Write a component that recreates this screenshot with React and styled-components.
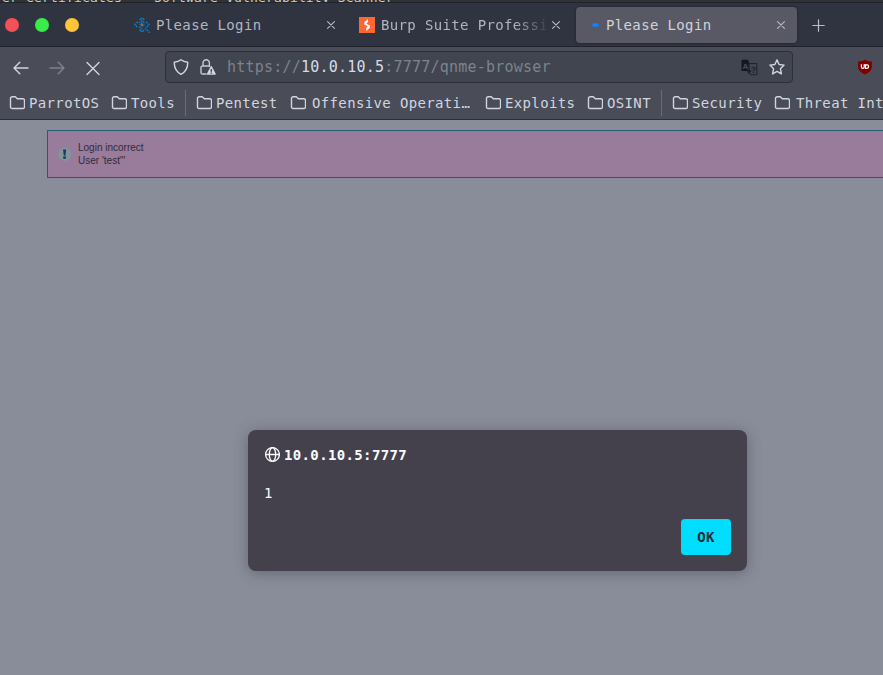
import React from "react";
import styled, { createGlobalStyle } from "styled-components";

const Global = createGlobalStyle`
  * { box-sizing: border-box; }
  body { margin: 0; overflow: hidden; background: #898d99; }
  svg { display: block; flex: none; }
`;

const Screen = styled.div`
  width: 883px;
  height: 675px;
  display: flex;
  flex-direction: column;
  overflow: hidden;
  background: #898d99;
  font-family: "DejaVu Sans Mono", monospace;
  font-size: 14px;
  letter-spacing: 0.36px;
  white-space: pre;
`;

const BackgroundStrip = styled.div`
  height: 3px;
  flex: none;
  overflow: hidden;
  background: #303234;
  border-bottom: 1px solid #202329;
  color: #d0ccc0;
  font-size: 13px;
  line-height: 16px;
  letter-spacing: 0.17px;
  padding-left: 2px;
`;
const StripText = styled.div`
  margin-top: -10px;
`;

const TabBar = styled.div`
  height: 44px;
  flex: none;
  display: flex;
  align-items: center;
  background: #303440;
  border-bottom: 1px solid #20232b;
  padding-left: 5px;
`;
const WindowButtons = styled.div`
  display: flex;
  gap: 16px;
  width: 121px;
`;
const WindowDot = styled.span`
  width: 14px;
  height: 14px;
  border-radius: 50%;
  background: ${(p) => p.$color};
`;
const Tab = styled.div`
  display: flex;
  align-items: center;
  width: ${(p) => p.$width}px;
  height: 36px;
  padding: 0 ${(p) => (p.$active ? 11 : 15)}px 0 8px;
  border-radius: 4px;
  color: ${(p) => (p.$active ? "#d0d3dc" : "#b0b5c3")};
  background: ${(p) => (p.$active ? "#585965" : "transparent")};
  box-shadow: ${(p) => (p.$active ? "0 0 3px rgba(0,0,0,.4)" : "none")};
`;
const TabTitle = styled.span`
  flex: 1;
  min-width: 0;
  margin-left: 6px;
  margin-right: ${(p) => (p.$fade ? 4 : 0)}px;
  overflow: hidden;
  ${(p) => p.$fade && "mask-image: linear-gradient(to right, #000 80%, transparent 102%);"}
`;
const NewTab = styled.div`
  margin: 1px 0 0 15px;
`;

const NavBar = styled.div`
  height: 41px;
  flex: none;
  display: flex;
  align-items: center;
  background: #4a4c57;
  padding: 0 10px 1px 13px;
`;
const NavButtons = styled.div`
  display: flex;
  gap: 20px;
  width: 152px;
  padding-top: 1px;
`;
const AddressBar = styled.div`
  width: 628px;
  height: 32px;
  display: flex;
  align-items: center;
  padding: 0 7px;
  border: 1px solid #2c2f39;
  border-radius: 4px;
  background: #404550;
`;
const Address = styled.span`
  flex: 1;
  margin-left: 11px;
  font-size: 15px;
  letter-spacing: 0.22px;
  color: #7e828d;
`;
const Host = styled.span`
  color: #d8dbe5;
`;
const IconSlot = styled.span`
  margin-left: ${(p) => p.$left}px;
`;

const BookmarksBar = styled.div`
  height: 32px;
  flex: none;
  display: flex;
  align-items: center;
  background: #4a4c57;
  border-bottom: 1px solid #2c2e38;
  padding: 0 0 2px 9px;
  color: #d0d5e1;
  overflow: hidden;
`;
const Bookmark = styled.div`
  display: flex;
  align-items: center;
  gap: ${(p) => p.$gap}px;
  width: ${(p) => p.$width}px;
  flex: none;
`;
const Divider = styled.div`
  width: 1px;
  height: 26px;
  flex: none;
  margin-right: 10px;
  background: #6a6d78;
`;

const Page = styled.main`
  flex: 1;
  display: flex;
  flex-direction: column;
  padding-top: 10px;
`;
const Alert = styled.div`
  display: flex;
  align-items: center;
  margin-left: 47px;
  width: 850px;
  height: 48px;
  padding-left: 10px;
  border: 1px solid #285978;
  background: #997b9b;
  color: #302c3c;
  font: 10px/13px "Liberation Sans", Arial, sans-serif;
  letter-spacing: 0;
`;
const AlertText = styled.div`
  margin-left: 6px;
`;

const Dialog = styled.section`
  display: flex;
  flex-direction: column;
  width: 499px;
  height: 141px;
  margin: 252px 0 0 248px;
  padding: 16px;
  border-radius: 8px;
  background: #44414d;
  color: #fbfbfe;
  box-shadow: 0 2px 14px rgba(58, 57, 68, 0.45);
`;
const DialogTitle = styled.div`
  display: flex;
  align-items: center;
  gap: 4px;
  height: 18px;
  font-weight: bold;
`;
const Message = styled.div`
  margin-top: 20px;
  height: 18px;
  line-height: 18px;
`;
const OkButton = styled.button`
  align-self: flex-end;
  width: 50px;
  height: 36px;
  margin-top: 17px;
  padding: 0;
  border: 0;
  border-radius: 4px;
  background: #00ddff;
  color: #2b2a33;
  font: bold 14px "DejaVu Sans Mono", monospace;
  letter-spacing: 0.36px;
`;

const Stroke = ({ size = 16, color = "#d0d5e1", width = 1.4, children }) => (
  <svg width={size} height={size} viewBox="0 0 16 16" fill="none" stroke={color} strokeWidth={width} strokeLinecap="round" strokeLinejoin="round">
    {children}
  </svg>
);
const CloseIcon = () => (
  <Stroke size={10} color="#b9bdc9" width={1.7}><path d="M2.5 2.5l11 11M13.5 2.5l-11 11" /></Stroke>
);
const FolderIcon = () => (
  <Stroke width={1.4}><path d="M3.1 1.7h3.2l2 2H14A1.5 1.5 0 0 1 15.5 5.2V12A1.5 1.5 0 0 1 14 13.5H3.1A1.6 1.6 0 0 1 1.5 11.900V3.300A1.600 1.600 0 0 1 3.100 1.700z" /></Stroke>
);
const ScanIcon = () => (
  <svg width="16" height="16" viewBox="0 0 16 16" fill="none" stroke="#087abe" strokeWidth="1.5">
    <path d="M5.5 3L8 .8 10.5 3M5.5 12.5L8 15l2.5-2.3" strokeDasharray="3 .6" />
    <path d="M4 4.8L1 7.8l3 3M12 4.8l3 3-3 3" strokeDasharray="2 .8" />
    <path d="M5.2 6L8 3.8 10.8 6M5.2 9.8L8 12" strokeDasharray="1.4 .8" />
    <path d="M11 11l5 5" strokeDasharray="1.8 .8" />
    <circle cx="8" cy="7.8" r="2.2" strokeWidth="1" strokeDasharray="1 1" />
    <circle cx="8" cy="7.8" r=".8" stroke="#8c6665" />
  </svg>
);
const BurpIcon = () => (
  <svg width="16" height="16" viewBox="0 0 16 16">
    <path fill="#ff6633" d="M0 0h16v16H0z" />
    <path fill="#fff" d="M9 2v3L7.3 6.8 11 8.6v1.9L7.3 14v-3.3L8.9 9.3 5.2 7.500V5.600z" />
  </svg>
);
const ShieldIcon = () => (
  <Stroke><path d="M8 .8C6.2 2.2 4.2 2.9 1.3 3.3c-.2 5 1.4 9.3 6.7 12 5.3-2.7 6.9-7 6.7-12C11.8 2.9 9.8 2.2 8 .8z" /></Stroke>
);
const LockIcon = () => (
  <svg width="16" height="16" viewBox="0 0 16 16" fill="none" stroke="#c5cad6" strokeWidth="1.4">
    <path d="M6.5 15H2.3A1.3 1.3 0 0 1 1 13.7V8.3A1.3 1.3 0 0 1 2.3 7h7.5M3 7V4a3.2 3.2 0 0 1 6.4 0v4" />
    <path fill="#d0d5e1" stroke="none" d="M10.6 7.5c.4-.6 1-.6 1.3 0l3.8 7.3c.2.6-.1 1-.7 1H7.5c-.6 0-.9-.5-.6-1z" />
    <path stroke="#404550" d="M11.3 10v2.7M11.3 13.6v1.1" />
  </svg>
);
const GlyphText = styled.text`
  font-family: "Liberation Sans", Arial, sans-serif;
  font-weight: bold;
  letter-spacing: 0;
`;
const TranslateIcon = () => (
  <svg width="17" height="17" viewBox="0 0 17 17">
    <path fill="#14171e" d="M.5 1.5Q.5.7 1.3.7H7l1.5 3.8V12H1.3Q.5 12 .5 11.2zM6 11.5h4.5L8 15z" />
    <path fill="none" stroke="#20242d" d="M7.5 4.5h8.3v11.2H9L7.5 12z" />
    <GlyphText x="1.5" y="9.5" fontSize="8" fill="#4a505b">A</GlyphText>
    <GlyphText x="9.7" y="13.5" fontSize="9" fill="#20242d">?</GlyphText>
  </svg>
);
const StarIcon = () => (
  <Stroke><path d="M8 .9l2.1 4.6 5 .6-3.7 3.6 1 5.2L8 12.4l-4.4 2.5 1-5.2L.9 6.100l5-.6z" /></Stroke>
);
const UblockIcon = () => (
  <svg width="16" height="16" viewBox="0 0 16 16">
    <path fill="#800000" d="M8 .5c2 1.4 3.9 1.9 6.900 2v5c0 3.700-2.700 6-6.900 8-4.200-2-6.900-4.300-6.900-8v-5C4.100 2.400 6 1.900 8 .5z" />
    <path fill="none" stroke="#fff" strokeWidth="1.2" d="M4.400 5.300V8a1.400 1.400 0 0 0 2.800 0V5.300" />
    <path fill="none" stroke="#fff" strokeWidth="1.2" d="M7.200 5.900h2.700a1.700 1.700 0 0 1 0 3.400H8.500V6" />
  </svg>
);
const GlobeIcon = () => (
  <Stroke color="#fbfbfe" width={1.3}><circle cx="8.5" cy="7.5" r="6.9" /><ellipse cx="8.5" cy="7.5" rx="3.2" ry="6.9" /><path d="M1.7 7.5h13.6" /></Stroke>
);
const LoadingIcon = () => (
  <svg width="16" height="16" viewBox="0 0 16 16"><ellipse cx="11.5" cy="8" rx="3.3" ry="1.9" fill="#0a84ff" /></svg>
);
const NoticeIcon = () => (
  <svg width="14" height="14" viewBox="0 0 14 14">
    <circle cx="6.6" cy="7.3" r="6.6" fill="#83949a" />
    <path fill="#153d69" d="M5 2.500h3.200l-.8 6.300H5.800zM5.200 9.600H8v2.200H5.200z" />
  </svg>
);

const bookmarks = [
  { label: "ParrotOS", width: 102, gap: 4 },
  { label: "Tools", width: 74, gap: 4 },
  { label: "Pentest", width: 94, gap: 4, divided: true },
  { label: "Offensive Operati…", width: 195, gap: 6 },
  { label: "Exploits", width: 102, gap: 4 },
  { label: "OSINT", width: 74, gap: 4 },
  { label: "Security", width: 102, gap: 4, divided: true },
  { label: "Threat Intel", width: 140, gap: 6 },
];

export default function App() {
  return (
    <Screen>
      <Global />
      <BackgroundStrip><StripText>er Certificates    Software Vulnerability Scanner</StripText></BackgroundStrip>
      <TabBar>
        <WindowButtons>
          <WindowDot $color="#f54f58" />
          <WindowDot $color="#38ed4b" />
          <WindowDot $color="#fdc53a" />
        </WindowButtons>
        <Tab $width={225}><ScanIcon /><TabTitle>Please Login</TabTitle><CloseIcon /></Tab>
        <Tab $width={225}><BurpIcon /><TabTitle $fade>Burp Suite Professional</TabTitle><CloseIcon /></Tab>
        <Tab $width={221} $active><LoadingIcon /><TabTitle>Please Login</TabTitle><CloseIcon /></Tab>
        <NewTab><Stroke size={13} color="#b9bdc9" width={1.5}><path d="M8 1v14M1 8h14" /></Stroke></NewTab>
      </TabBar>
      <NavBar>
        <NavButtons>
          <Stroke><path d="M15 8H1M6.8 2.2L1 8l5.8 5.8" /></Stroke>
          <Stroke color="#7f838f"><path d="M1 8h14M9.2 2.2L15 8l-5.8 5.8" /></Stroke>
          <Stroke><path d="M2 2.5l12 12M14 2.5l-12 12" /></Stroke>
        </NavButtons>
        <AddressBar>
          <ShieldIcon />
          <IconSlot $left={11}><LockIcon /></IconSlot>
          <Address>https://<Host>10.0.10.5</Host>:7777/qnme-browser</Address>
          <TranslateIcon />
          <IconSlot $left={11}><StarIcon /></IconSlot>
        </AddressBar>
        <IconSlot $left={64}><UblockIcon /></IconSlot>
      </NavBar>
      <BookmarksBar>
        {bookmarks.map((b) => (
          <React.Fragment key={b.label}>
            {b.divided && <Divider />}
            <Bookmark $width={b.width} $gap={b.gap}><FolderIcon />{b.label}</Bookmark>
          </React.Fragment>
        ))}
      </BookmarksBar>
      <Page>
        <Alert>
          <NoticeIcon />
          <AlertText>Login incorrect<br />User 'test"'</AlertText>
        </Alert>
        <Dialog>
          <DialogTitle><GlobeIcon />10.0.10.5:7777</DialogTitle>
          <Message>1</Message>
          <OkButton>OK</OkButton>
        </Dialog>
      </Page>
    </Screen>
  );
}
